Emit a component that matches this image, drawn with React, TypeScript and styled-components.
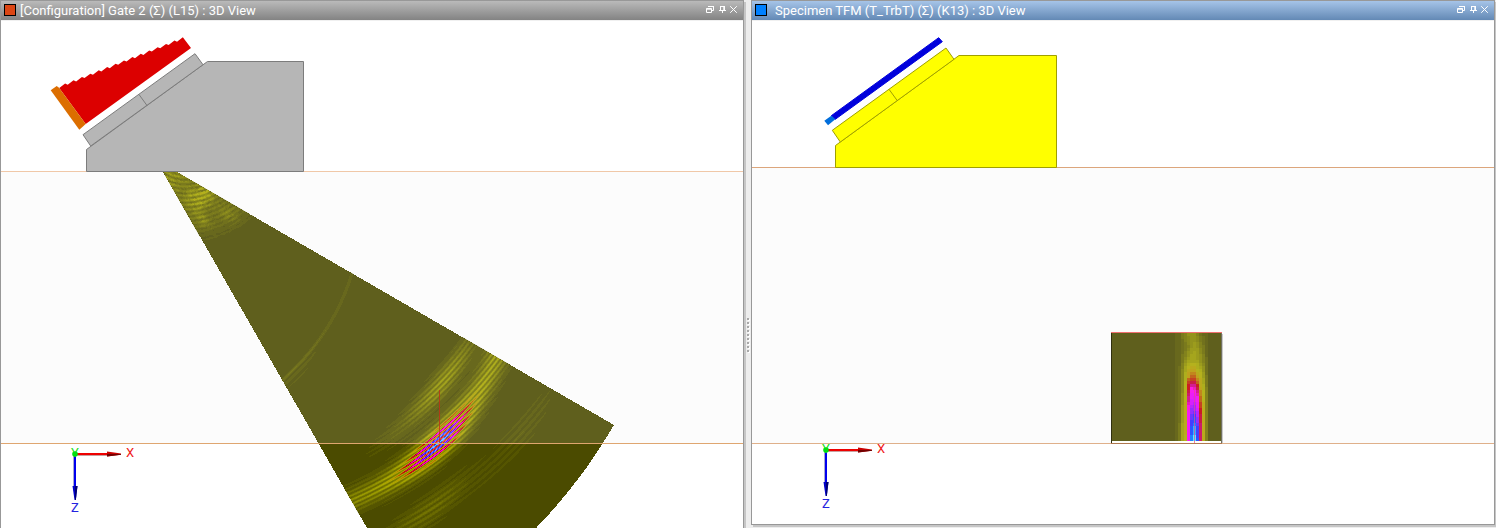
import React from "react";
import styled, { createGlobalStyle } from "styled-components";

/* ---------- page ---------- */

const GlobalStyle = createGlobalStyle`
  * { box-sizing: border-box; }
  html, body, #root { height: 100%; }
  body {
    margin: 0;
    background: #ededed;
    font-family: Roboto, "DejaVu Sans", sans-serif;
    font-size: 13px;
    overflow: hidden;
  }
`;

const Workspace = styled.main`
  display: flex;
  height: 100%;
  padding-right: 1px;
`;

const Pane = styled.section<{ $docked: boolean }>`
  flex: 1 1 0;
  min-width: 0;
  display: flex;
  flex-direction: column;
  background: #ffffff;
  border: 1px solid #989898;
  border-bottom-width: ${(p) => (p.$docked ? "0" : "1px")};
  margin-bottom: ${(p) => (p.$docked ? "0" : "3px")};
  box-shadow: 2px 2px 0 #c6c6c6;
`;

const TitleBar = styled.header<{ $active: boolean }>`
  flex: none;
  display: flex;
  align-items: flex-start;
  height: 20px;
  padding: 0 3px;
  color: #ffffff;
  border-bottom: 1px solid #f0f0f0;
  background: ${(p) =>
    p.$active
      ? "linear-gradient(#a6c4e8, #6389b5)"
      : "linear-gradient(#bababa, #838383)"};
`;

const Swatch = styled.span<{ $color: string }>`
  flex: none;
  width: 12px;
  height: 12px;
  margin-top: 3px;
  border: 1px solid #000000;
  background: ${(p) => p.$color};
`;

const Title = styled.h2<{ $indent: number }>`
  flex: 1;
  min-width: 0;
  margin: 0;
  padding-left: ${(p) => p.$indent}px;
  font-size: 13px;
  line-height: 19px;
  font-weight: 400;
  white-space: nowrap;
  overflow: hidden;
`;

const TitleButton = styled.button`
  flex: none;
  display: flex;
  align-items: flex-start;
  width: 12px;
  height: 16px;
  padding: 5px 2px 0;
  border: 0;
  background: none;
  color: inherit;
`;

const Scene = styled.svg`
  flex: 1;
  display: block;
  width: 100%;
  min-height: 0;
  font-size: 13px;
`;

const Splitter = styled.div`
  flex: none;
  width: 7px;
  display: flex;
  flex-direction: column;
  align-items: flex-start;
  gap: 2px;
  padding: 318px 0 0 3px;
`;

const GripDot = styled.span`
  width: 2px;
  height: 2px;
  background: #a8a8a8;
  box-shadow: 1px 1px 0 #ffffff;
`;

/* ---------- window chrome ---------- */

const Glyph = ({ d }: { d: string }) => (
  <svg width="8" height="8" viewBox="0 0 8 8" fill="none" stroke="#fff" aria-hidden="true">
    <path d={d} />
  </svg>
);

const GLYPHS = [
  { label: "Restore", d: "M0.5 2.500H5.500V6.500H0.500ZM0 3.200H6M2 0.500H8M7.500 0V4.500H6" },
  { label: "Pin", d: "M2.500 0V4.500M2 0.500H7M6.500 0V4.500M5.800 0V4.500M1 4.500H8M4.500 4V7" },
  { label: "Close", d: "M0.200 0.200L6.800 6.800M6.800 0.200L0.200 6.800" },
];

interface ViewPaneProps {
  title: string;
  color: string;
  active?: boolean;
  docked?: boolean;
  indent: number;
  children: React.ReactNode;
}

/* Scene coordinates are measured from the outer corner of the pane frame. */
const ViewPane = ({ title, color, active = false, docked = false, indent, children }: ViewPaneProps) => (
  <Pane $docked={docked}>
    <TitleBar $active={active}>
      <Swatch $color={color} />
      <Title $indent={indent}>{title}</Title>
      {GLYPHS.map((g) => (
        <TitleButton key={g.label} type="button" aria-label={g.label}>
          <Glyph d={g.d} />
        </TitleButton>
      ))}
    </TitleBar>
    <Scene role="img" aria-label={title}>
      <g transform="translate(-1 -21)">{children}</g>
    </Scene>
  </Pane>
);

/* ---------- amplitude palette ---------- */

const STOPS: [number, number, number, number][] = [
  [0, 75, 75, 0],
  [0.3, 170, 170, 0],
  [0.38, 184, 150, 0],
  [0.44, 186, 80, 0],
  [0.5, 194, 0, 10],
  [0.58, 196, 0, 110],
  [0.66, 255, 0, 230],
  [0.74, 225, 0, 255],
  [0.82, 130, 20, 255],
  [0.89, 20, 40, 255],
  [0.95, 0, 130, 255],
  [1, 60, 235, 255],
];

const LEVELS = 32;

const paletteColor = (v: number) => {
  const i = Math.max(1, STOPS.findIndex((s) => s[0] >= v));
  const a = STOPS[i - 1];
  const b = STOPS[i];
  const t = (v - a[0]) / (b[0] - a[0]);
  const c = [1, 2, 3].map((k) => Math.round(a[k] + (b[k] - a[k]) * t));
  return `rgb(${c.join(",")})`;
};

/* Turns an amplitude field into one path per palette level. */
const rasterize = (
  field: (x: number, y: number) => number,
  x0: number,
  y0: number,
  x1: number,
  y1: number,
  cell = 1
) => {
  const paths: string[] = Array(LEVELS + 1).fill("");
  for (let y = y0; y < y1; y += cell) {
    const h = Math.min(cell, y1 - y);
    let start = x0;
    let level = -1;
    for (let x = x0; x <= x1 + cell; x += cell) {
      const end = x >= x1;
      const next = end ? -1 : Math.round(Math.max(0, Math.min(1, field(x, y))) * LEVELS);
      if (next !== level) {
        const w = Math.min(x, x1) - start;
        if (level > 0) paths[level] += `M${start} ${y}h${w}v${h}h${-w}z`;
        start = x;
        level = next;
      }
      if (end) break;
    }
  }
  return paths;
};

const HeatMap = ({ paths }: { paths: string[] }) => (
  <g shapeRendering="crispEdges">
    {paths.map((d, i) => (d ? <path key={i} d={d} fill={paletteColor(i / LEVELS)} /> : null))}
  </g>
);

/* ---------- sector scan ---------- */

const APEX = { x: 156, y: 160 };

const bell = (v: number, center: number, width: number) => Math.exp(-(((v - center) / width) ** 2));

const ripple = (r: number, deg: number, period: number, tilt: number) =>
  0.5 + 0.5 * Math.cos((2 * Math.PI * (r + tilt * (deg - 45))) / period);

const noise = (a: number, b: number) => {
  const n = Math.sin(a * 12.9898 + b * 78.233) * 43758.5453;
  return n - Math.floor(n);
};

/* Dead-zone echoes: rings around a point inside the wedge. */
const nearField = (x: number, y: number, r: number, deg: number) => {
  const rho = Math.hypot(x - 185, y - 140);
  const fade = Math.min(1, Math.max(0, (106 - rho) / 22));
  const rings = 0.5 + 0.5 * Math.cos((2 * Math.PI * rho) / 4.6);
  const grain = noise(Math.round(deg / 2), Math.round(r / 2.5));
  const bright = 0.2 * bell(x, 200, 15) * bell(rho, 58, 12) + 0.12 * bell(r, 24, 14);
  const lobes = 0.1 * bell(deg, 52, 4) * bell(r, 74, 12) + 0.07 * bell(deg, 37, 5) * bell(r, 92, 12);
  return fade * (0.07 + bright + lobes) * (0.3 + 0.65 * rings + 0.45 * grain);
};

const sectorField = (x: number, y: number) => {
  const dx = x + 0.5 - APEX.x;
  const dy = y + 0.5 - APEX.y;
  const r = Math.hypot(dx, dy);
  const deg = (Math.atan2(dy, dx) * 180) / Math.PI;
  if (deg < 29.5 || deg > 60.5 || r > 529) return 0;
  if (r < 135) return nearField(x, y, r, deg);

  const center = 400 - 0.03 * (deg - 45) ** 2;
  const core = bell(deg, 45, 5.8);
  const edge = 0.29 - 0.06 * bell(deg, 61, 5);
  const main = (edge + 0.82 * core) * bell(r, center, 11) * (0.36 + 0.64 * ripple(r, deg, 4, 0.8));
  const upper =
    (0.27 * bell(deg, 38, 8) + 0.02 * bell(deg, 51, 5)) * bell(r, 363, 9) * (0.35 + 0.65 * ripple(r, deg, 4, 0.7));
  const lower = 0.13 * bell(deg, 52, 6) * bell(r, 444, 11) * (0.3 + 0.7 * ripple(r, deg, 5, 0.8));
  const right = 0.05 * bell(deg, 38, 7) * bell(r, 456, 11) * ripple(r, deg, 5, 0.8);
  const drift = 227 + 0.92 * (deg - 30.7);
  const faint =
    0.045 * bell(r, drift, 1.6) + 0.045 * bell(deg, 57, 7) * bell(r, drift + 3, 7) * ripple(r, deg, 5, -0.9);
  return main + upper + lower + right + faint;
};

const sectorPaths = rasterize(sectorField, 160, 172, 616, 560);

const SECTOR = "M163 172H177L614 425A529 529 0 0 1 420.500 618L367 528Z";

/* ---------- focused image ---------- */

/* Amplitude per column (3 px wide), sampled at the heights in ROW_KEYS. */
const ROW_KEYS = [333, 345, 360, 367, 375, 381, 388, 396, 410, 425, 441];
const COLUMNS: Record<number, number[]> = {
  21: [0.02, 0.04, 0.03, 0.03, 0.03, 0.03, 0.03, 0.03, 0.04, 0.04, 0.04],
  22: [0.04, 0.03, 0.04, 0.05, 0.05, 0.05, 0.05, 0.05, 0.07, 0.08, 0.08],
  23: [0.1, 0.05, 0.1, 0.14, 0.16, 0.16, 0.16, 0.18, 0.22, 0.24, 0.24],
  24: [0.14, 0.08, 0.18, 0.26, 0.28, 0.3, 0.3, 0.32, 0.34, 0.34, 0.32],
  25: [0.18, 0.14, 0.24, 0.34, 0.38, 0.48, 0.5, 0.58, 0.68, 0.7, 0.7],
  26: [0.2, 0.2, 0.26, 0.36, 0.44, 0.52, 0.68, 0.72, 0.82, 0.9, 0.94],
  27: [0.18, 0.22, 0.26, 0.36, 0.44, 0.52, 0.66, 0.74, 0.84, 0.96, 1],
  28: [0.14, 0.2, 0.24, 0.3, 0.38, 0.44, 0.56, 0.68, 0.76, 0.86, 0.9],
  29: [0.06, 0.14, 0.2, 0.26, 0.32, 0.34, 0.38, 0.44, 0.5, 0.56, 0.58],
  30: [0.04, 0.08, 0.14, 0.18, 0.22, 0.26, 0.3, 0.32, 0.34, 0.34, 0.34],
  31: [0.02, 0.04, 0.05, 0.06, 0.08, 0.1, 0.12, 0.13, 0.14, 0.14, 0.14],
};

const imageField = (x: number, y: number) => {
  const column = COLUMNS[Math.floor((x - 361) / 3)];
  if (!column) return 0;
  const i = Math.max(1, ROW_KEYS.findIndex((k) => k >= y));
  const t = (y - ROW_KEYS[i - 1]) / (ROW_KEYS[i] - ROW_KEYS[i - 1]);
  return column[i - 1] + (column[i] - column[i - 1]) * t;
};

const imagePaths = rasterize(imageField, 361, 333, 471, 441, 3);

/* ---------- shared drawing parts ---------- */

const SurfaceLine = ({ y, color }: { y: number; color: string }) => (
  <rect x="1" y={y} width="100%" height="1" fill={color} />
);

const Specimen = ({ top }: { top: number }) => (
  <rect x="1" y={top} width="100%" height={443 - top} fill="#fcfcfc" />
);

const Axes = ({ y }: { y: number }) => (
  <g transform={`translate(75 ${y})`}>
    <rect x="0" y="-1" width="36" height="2" fill="#ee0000" />
    <rect x="0" y="1" width="36" height="1" fill="#c8a0a0" />
    <path d="M32 -2.500L46 -0.500V0.800L32 2.500Z" fill="#c80000" />
    <path d="M32 0L46 0V0.800L32 2.500Z" fill="#700000" />
    <rect x="-1" y="0" width="2" height="36" fill="#0000ee" />
    <rect x="-2" y="0" width="1" height="34" fill="#a8a8d0" />
    <path d="M-2.500 32L-0.500 46H0.800L2.500 32Z" fill="#0000c8" />
    <path d="M0 32V46H0.800L2.500 32Z" fill="#000070" />
    <text x="0" y="3" textAnchor="middle" fill="#22e022">Y</text>
    <circle r="2.800" fill="#00e010" />
    <text x="55" y="3" textAnchor="middle" fill="#f01818">X</text>
    <text x="0" y="58" textAnchor="middle" fill="#2424e0">Z</text>
  </g>
);

const lawTop = Array.from({ length: 15 }, (_, i) => {
  const x = 59.3 + 8.41 * i;
  const y = 88 - 3.31 * i;
  return `L${x} ${y}L${x + 5.8} ${y - 4.4}`;
}).join("");

const SectorView = () => (
  <>
    <Specimen top={172} />
    <defs>
      <clipPath id="sector">
        <path d={SECTOR} shapeRendering="crispEdges" />
      </clipPath>
    </defs>
    <path d={SECTOR} fill="#4b4b00" shapeRendering="crispEdges" />
    <g clipPath="url(#sector)">
      <HeatMap paths={sectorPaths} />
      <rect x="160" y="172" width="460" height="271" fill="#ffffff" opacity="0.115" />
    </g>
    <rect x="439" y="390" width="1" height="53" fill="#c03018" opacity="0.8" />
    <SurfaceLine y={171} color="#f0c8a8" />
    <SurfaceLine y={443} color="#dfa670" />
    <g fill="#b6b6b6" stroke="#7c7c7c">
      <path d="M86.500 171.500V149.500L207.500 61.500H303.500V171.500Z" />
      <path d="M83 134.700L195 53.700L203 64.700L90.700 146Z" />
      <path d="M139 94.500L147 105.500" />
    </g>
    <path d={`M59 87.700${lawTop}L191 48L85.700 124Z`} fill="#dc0000" />
    <path d="M50.700 90.300L56.700 86L59 87.700L85.700 124L79.300 129.700Z" fill="#dc6e00" />
    <Axes y={454} />
  </>
);

const ImageView = () => (
  <>
    <Specimen top={168} />
    <rect x="360" y="333" width="111" height="108" fill="#4b4b00" />
    <HeatMap paths={imagePaths} />
    <rect x="360" y="333" width="111" height="108" fill="#ffffff" opacity="0.115" />
    <rect x="360" y="332" width="111" height="1" fill="#f07070" />
    <rect x="360" y="333" width="1" height="110" fill="#303010" />
    <rect x="470" y="333" width="1" height="110" fill="#707060" />
    <rect x="471" y="334" width="1" height="109" fill="#c8c8c8" />
    <rect x="361" y="441" width="109" height="2" fill="#fffffa" />
    <rect x="443" y="388" width="1" height="55" fill="#f04090" opacity="0.7" />
    <SurfaceLine y={167} color="#dca67c" />
    <SurfaceLine y={443} color="#dfb08a" />
    <rect x="360" y="443" width="111" height="1" fill="#b07850" />
    <g fill="#ffff00" stroke="#a0a000">
      <path d="M84.500 167.500V145.500L208 55.500H305.500V167.500Z" />
      <path d="M81.300 130.300L195 48L203 59.300L89.300 142Z" />
      <path d="M138 89.300L146.300 100.700" />
    </g>
    <path d="M80.300 115.700L187.700 37.700L191.300 41.700L84.300 119.300Z" fill="#0000dc" stroke="#0000dc" />
    <path d="M73.300 120.700L80.300 115.700L84.300 119.300L77 125.300Z" fill="#006edc" />
    <Axes y={450} />
  </>
);

export default function App() {
  return (
    <>
      <GlobalStyle />
      <Workspace>
        <ViewPane title="[Configuration] Gate 2 (Σ) (L15) : 3D View" color="#dc4614" indent={4} docked>
          <SectorView />
        </ViewPane>
        <Splitter role="separator" aria-orientation="vertical">
          {Array.from({ length: 9 }, (_, i) => (
            <GripDot key={i} />
          ))}
        </Splitter>
        <ViewPane title="Specimen TFM (T_TrbT) (Σ) (K13) : 3D View" color="#0080ff" indent={8} active>
          <ImageView />
        </ViewPane>
      </Workspace>
    </>
  );
}
